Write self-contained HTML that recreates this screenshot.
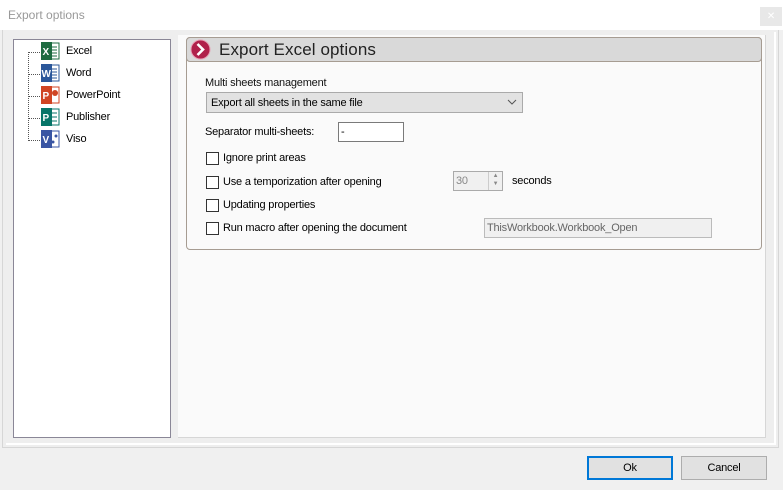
<!DOCTYPE html>
<html><head><style>
*{margin:0;padding:0;box-sizing:border-box}
body{width:783px;height:490px;background:#f0f0f0;font-family:"Liberation Sans",sans-serif;font-size:11px;letter-spacing:-0.2px;color:#000;position:relative;overflow:hidden}
.a{position:absolute}
.t{white-space:nowrap}
.cb{position:absolute;width:13px;height:13px;border:1px solid #333;background:#fff}
</style></head><body>
<div class="a" style="left:0;top:0;width:783px;height:30px;background:#fff"></div>
<div class="a t" style="left:8px;top:8px;color:#999;font-size:12px;letter-spacing:0">Export options</div>
<div class="a" style="left:760px;top:7px;width:22px;height:19px;background:#e8e8e8;color:#fff;font-size:10px;text-align:center;line-height:19px">✕</div>
<div class="a" style="left:2px;top:30px;width:777px;height:418px;border:1px solid #d6d6d6;border-top:none;background:#eeeeee"></div>
<div class="a" style="left:6px;top:32px;width:770px;height:413px;border-right:2px solid #fff;border-bottom:2px solid #fff"></div>
<div class="a" style="left:13px;top:39px;width:158px;height:399px;background:#fff;border:1px solid #8a8797"></div>
<div class="a" style="left:28px;top:52px;height:89px;border-left:1px dotted #555"></div>
<div class="a" style="left:28px;top:52px;width:12px;border-top:1px dotted #555"></div>
<div class="a" style="left:28px;top:74px;width:12px;border-top:1px dotted #555"></div>
<div class="a" style="left:28px;top:96px;width:12px;border-top:1px dotted #555"></div>
<div class="a" style="left:28px;top:118px;width:12px;border-top:1px dotted #555"></div>
<div class="a" style="left:28px;top:140px;width:12px;border-top:1px dotted #555"></div>
<svg class="a" style="left:40px;top:41px" width="22" height="110">
<g font-family="Liberation Sans" font-weight="bold" font-size="10" fill="#fff">
<rect x="9" y="2" width="10" height="16" fill="#fff" stroke="#1d6b40"/><path d="M11 6h6M11 9h6M11 12h6M11 15h6" stroke="#1d6b40"/>
<rect x="1" y="1" width="11" height="18" fill="#1d6b40"/><text x="2.5" y="14">X</text>
<rect x="9" y="24" width="10" height="16" fill="#fff" stroke="#2b579a"/><path d="M11 28h6M11 31h6M11 34h6M11 37h6" stroke="#2b579a"/>
<rect x="1" y="23" width="11" height="18" fill="#2b579a"/><text x="1.5" y="36">W</text>
<rect x="9" y="46" width="10" height="16" fill="#fff" stroke="#d04423"/><circle cx="15" cy="52" r="3" fill="#d04423"/>
<rect x="1" y="45" width="11" height="18" fill="#d04423"/><text x="2.5" y="58">P</text>
<rect x="9" y="68" width="10" height="16" fill="#fff" stroke="#077568"/><path d="M11 72h6M11 76h6M11 80h6" stroke="#077568"/>
<rect x="1" y="67" width="11" height="18" fill="#077568"/><text x="2.5" y="80">P</text>
<rect x="9" y="90" width="10" height="16" fill="#fff" stroke="#3955a3"/><circle cx="16" cy="95" r="1.5" fill="#3955a3"/><circle cx="13" cy="101" r="1.5" fill="#3955a3"/>
<rect x="1" y="89" width="11" height="18" fill="#3955a3"/><text x="2.5" y="102">V</text>
</g></svg>
<div class="a t" style="left:66px;top:45px">Excel</div>
<div class="a t" style="left:66px;top:67px">Word</div>
<div class="a t" style="left:66px;top:89px">PowerPoint</div>
<div class="a t" style="left:66px;top:111px">Publisher</div>
<div class="a t" style="left:66px;top:133px">Viso</div>
<div class="a" style="left:178px;top:35px;width:588px;height:403px;background:#fafafa;border-right:1px solid #d6d6d6;border-bottom:1px solid #d6d6d6"></div>
<div class="a" style="left:186px;top:37px;width:576px;height:213px;border:1px solid #a69c92;border-radius:4px;background:#fafafa"></div>
<div class="a" style="left:186px;top:37px;width:576px;height:25px;border:1px solid #a69c92;border-radius:4px;background:#d9d9d9"></div>
<svg class="a" style="left:190px;top:39px" width="21" height="21"><circle cx="10.5" cy="10.5" r="9.5" fill="#b0204a"/><circle cx="10.5" cy="10.5" r="9.5" fill="none" stroke="#e7a0b5" stroke-width="1"/><path d="M7.5 5l5.5 5.5-5.5 5.5" stroke="#fff" stroke-width="2.6" fill="none"/></svg>
<div class="a t" style="left:219px;top:40px;font-size:17px;letter-spacing:0.1px;color:#222">Export Excel options</div>
<div class="a t" style="left:205px;top:77px;color:#111">Multi sheets management</div>
<div class="a" style="left:206px;top:92px;width:317px;height:21px;background:#e2e2e2;border:1px solid #aaa"></div>
<div class="a t" style="left:211px;top:97px">Export all sheets in the same file</div>
<svg class="a" style="left:507px;top:98px" width="10" height="8"><path d="M1 2l4 4 4-4" stroke="#555" fill="none"/></svg>
<div class="a t" style="left:205px;top:126px">Separator multi-sheets:</div>
<div class="a" style="left:338px;top:122px;width:66px;height:20px;background:#fff;border:1px solid #7a7a7a"></div>
<div class="a t" style="left:341px;top:126px">-</div>
<div class="cb" style="left:206px;top:152px"></div><div class="a t" style="left:223px;top:152px">Ignore print areas</div>
<div class="cb" style="left:206px;top:176px"></div><div class="a t" style="left:223px;top:176px">Use a temporization after opening</div>
<div class="cb" style="left:206px;top:199px"></div><div class="a t" style="left:223px;top:199px">Updating properties</div>
<div class="cb" style="left:206px;top:222px"></div><div class="a t" style="left:223px;top:222px">Run macro after opening the document</div>
<div class="a" style="left:453px;top:171px;width:50px;height:20px;background:#f0f0f0;border:1px solid #aaa"></div>
<div class="a t" style="left:456px;top:175px;color:#888">30</div>
<div class="a" style="left:488px;top:172px;width:14px;height:18px;border-left:1px solid #ccc;font-size:6px;color:#888;text-align:center;line-height:8px">▲<br>▼</div>
<div class="a t" style="left:512px;top:175px">seconds</div>
<div class="a" style="left:484px;top:218px;width:228px;height:20px;background:#f0f0f0;border:1px solid #bbb"></div>
<div class="a t" style="left:487px;top:222px;color:#666">ThisWorkbook.Workbook_Open</div>
<div class="a" style="left:587px;top:456px;width:86px;height:24px;background:#e1e1e1;border:2px solid #0078d7;text-align:center;line-height:20px">Ok</div>
<div class="a" style="left:681px;top:456px;width:86px;height:24px;background:#e1e1e1;border:1px solid #adadad;text-align:center;line-height:22px">Cancel</div>
</body></html>
